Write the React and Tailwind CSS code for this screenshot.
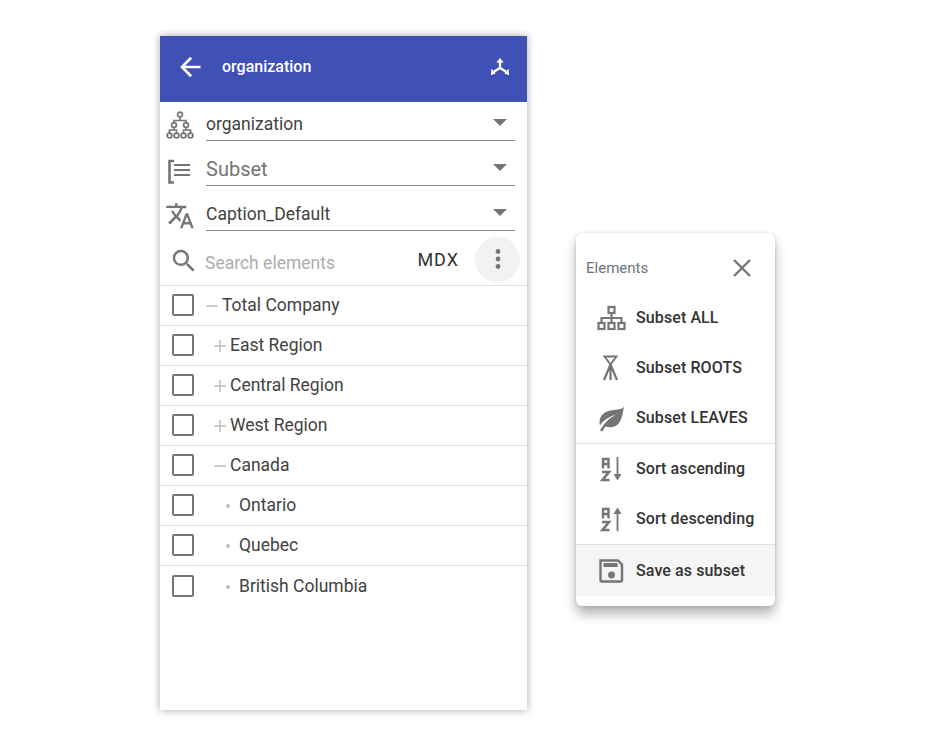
const G = "#757575";

const Arrow = () => (
  <svg width="28" height="28" viewBox="0 0 24 24" fill="#fff"><path d="M21 10.900H7.800l6-6L12.200 3.300 3.500 12l8.700 8.700 1.600-1.600-6-6H21z" /></svg>
);
const Axes = () => (
  <svg width="20" height="20" viewBox="0 0 22 22" fill="none" stroke="#fff" strokeWidth="2.600">
    <path d="M11 4v8M11 12l-6.500 4M11 12l6.500 4" />
    <path d="M7 6L11 1l4 5z" fill="#fff" stroke="none" />
    <path d="M1.500 13L1 20l5.500-2z" fill="#fff" stroke="none" />
    <path d="M20.500 13L21 20l-5.500-2z" fill="#fff" stroke="none" />
  </svg>
);
const Hierarchy = () => (
  <svg width="30" height="30" viewBox="0 0 30 30" fill="none" stroke={G} strokeWidth="1.700">
    <circle cx="15" cy="4.500" r="2.400" />
    <circle cx="9" cy="15" r="2.400" /><circle cx="21" cy="15" r="2.400" />
    <circle cx="4.500" cy="25.500" r="2.400" /><circle cx="11.500" cy="25.500" r="2.400" /><circle cx="18.500" cy="25.500" r="2.400" /><circle cx="25.500" cy="25.500" r="2.400" />
    <path d="M15 7v3.500M9 12.500v-2h12v2M4.500 23v-3h7v3M18.500 23v-3h7v3M9 17.500V20M21 17.500V20" />
  </svg>
);
const SubsetIcon = () => (
  <svg width="30" height="30" viewBox="0 0 30 30" fill="none" stroke={G}>
    <path d="M9 6H4.500v21.500H9" strokeWidth="2.600" />
    <path d="M9 10h16M9 15h16M9 20h16" strokeWidth="2.200" />
  </svg>
);
const Translate = () => (
  <svg width="30" height="30" viewBox="0 0 24 24" fill={G}>
    <path d="M12.870 15.070l-2.540-2.510.03-.03c1.740-1.940 2.980-4.170 3.710-6.530H17V4h-7V2H8v2H1v1.990h11.170C11.500 7.920 10.440 9.750 9 11.350 8.070 10.320 7.300 9.190 6.690 8h-2c.73 1.630 1.730 3.170 2.980 4.560l-5.090 5.020L4 19l5-5 3.110 3.110.76-2.040zM18.500 10h-2L12 22h2l1.120-3h4.750L21 22h2l-4.500-12zm-2.620 7l1.620-4.330L19.120 17h-3.240z" transform="translate(0 .5)" />
  </svg>
);
const Search = () => (
  <svg width="30" height="30" viewBox="0 0 24 24" fill={G}>
    <path d="M15.500 14h-.79l-.28-.27A6.470 6.470 0 0 0 16 9.500 6.500 6.500 0 1 0 9.500 16c1.610 0 3.090-.59 4.230-1.570l.27.28v.79l5 4.990L20.490 19l-4.990-5zm-6 0C7.010 14 5 11.990 5 9.500S7.010 5 9.500 5 14 7.010 14 9.500 11.990 14 9.500 14z" />
  </svg>
);
const Dots = () => (
  <svg width="24" height="24" viewBox="0 0 24 24" fill={G}>
    <circle cx="12" cy="4.500" r="2.400" /><circle cx="12" cy="12" r="2.400" /><circle cx="12" cy="19.500" r="2.400" />
  </svg>
);
const Close = () => (
  <svg width="28" height="28" viewBox="0 0 28 28" fill="none" stroke={G} strokeWidth="2.400">
    <path d="M6 6l16 16M22 6L6 22" />
  </svg>
);
const IconAll = () => (
  <svg width="30" height="30" viewBox="0 0 30 30" fill="none" stroke={G} strokeWidth="2.200">
    <rect x="12.500" y="4" width="6" height="6" />
    <rect x="2.500" y="20" width="6" height="6" /><rect x="12.500" y="20" width="6" height="6" /><rect x="22.500" y="20" width="6" height="6" />
    <path d="M15.500 10v10M5.500 20v-5h20v5" />
  </svg>
);
const IconRoots = () => (
  <svg width="30" height="30" viewBox="0 0 30 30" fill="none" stroke={G}>
    <path d="M8.500 3.500h12L14.500 11.500z" strokeWidth="1.900" />
    <path d="M14.500 11.500L8 27M14.500 11.500V27M14.500 11.500L21 27" strokeWidth="2.200" />
  </svg>
);
const IconLeaf = () => (
  <svg width="30" height="30" viewBox="0 0 30 30" fill={G}>
    <path d="M28 3c-.500 1.500-1.500 2.500-3.500 3C18 7.500 11 6.500 6.500 11.500c-3 3.300-3.400 7.500-2.500 11C7 17.500 13 14 20 11.500c-6.500 3.500-12 8.500-16 16l2.300 1c1-1.800 2-3.500 3.200-5 5.500 1.500 11 .5 14-4.300C26.300 15 27 9 28 3z" />
  </svg>
);
const SortIcon = ({ up }) => (
  <svg width="30" height="30" viewBox="0 0 30 30" fill="none" stroke={G}>
    <path d="M7 14.500V5h5.500v9.500M7 10h5.500" strokeWidth="2.400" />
    <path d="M6 18h7L6.500 26H13.500" strokeWidth="2.600" />
    {up ? (
      <>
        <path d="M21.500 8v19" strokeWidth="1.800" />
        <path d="M17.500 10h8l-4-6.500z" fill={G} stroke="none" />
      </>
    ) : (
      <>
        <path d="M21.500 3v19" strokeWidth="1.800" />
        <path d="M17.500 20h8l-4 6.500z" fill={G} stroke="none" />
      </>
    )}
  </svg>
);
const IconSave = () => (
  <svg width="30" height="30" viewBox="0 0 30 30" fill="none" stroke={G}>
    <path d="M4.500 4.500h17.500L26 8.500v15.500a1.500 1.500 0 0 1-1.500 1.500H6A1.500 1.500 0 0 1 4.500 24z" strokeWidth="2.400" />
    <rect x="7.500" y="7" width="14" height="4" fill={G} stroke="none" />
    <circle cx="15.500" cy="19" r="3.400" fill={G} stroke="none" />
  </svg>
);

function SelectRow({ icon, label, placeholder }) {
  return (
    <div className="flex h-[45px] items-start">
      <div className="flex w-[46px] shrink-0 justify-start pl-[5px] pt-[7px]">{icon}</div>
      <div className={`mr-3 flex h-[38px] flex-1 items-center justify-between border-b border-[#8a8a8a] ${placeholder ? "text-[20px] text-[#757575]" : "text-[17.500px] text-[#424242]"}`}>
        <span className={`${placeholder ? "pt-[4px]" : "pt-[6px]"} leading-none`}>{label}</span>
        <span className="mr-[8px] mt-[2px] h-0 w-0 border-x-[7px] border-t-[7px] border-x-transparent border-t-[#757575]" />
      </div>
    </div>
  );
}

const tree = [
  ["Total Company", "minus", 46, 40],
  ["East Region", "plus", 54, 40],
  ["Central Region", "plus", 54, 40],
  ["West Region", "plus", 54, 40],
  ["Canada", "minus", 54, 40],
  ["Ontario", "dot", 62, 40],
  ["Quebec", "dot", 62, 40],
  ["British Columbia", "dot", 62, 41],
];

function Marker({ kind }) {
  if (kind === "dot") return <span className="mr-[9px] ml-[4px] h-[4px] w-[4px] rounded-full bg-[#bdbdbd]" />;
  return (
    <svg width="14" height="14" viewBox="0 0 14 14" className="mr-[3px] -ml-[1px]" stroke="#bdbdbd" strokeWidth="1.500" fill="none">
      <path d="M1 7h12" />
      {kind === "plus" && <path d="M7 1v12" />}
    </svg>
  );
}

function TreeRow({ label, kind, pad, h, last }) {
  return (
    <div className={`flex items-center text-[17.500px] text-[#424242] ${last ? "" : "border-b border-[#e0e0e0]"}`} style={{ height: h }}>
      <span className="-mt-[1px] ml-[12px] h-[22px] w-[22px] shrink-0 rounded-[2px] border-2 border-[#757575]" />
      <div className="flex items-center" style={{ marginLeft: pad - 34 }}>
        <Marker kind={kind} />
        <span className="pb-[1px]">{label}</span>
      </div>
    </div>
  );
}

function MenuItem({ icon, label, className = "" }) {
  return (
    <div className={`flex h-[50px] items-center pl-[20px] text-[16px] font-medium tracking-[0.1px] text-[#333] ${className}`}>
      <span className="mr-[10px] flex h-[30px] w-[30px] shrink-0 items-center justify-center">{icon}</span>
      <span>{label}</span>
    </div>
  );
}

export default function App() {
  return (
    <div className="flex h-[745px] w-[939px] items-start bg-white font-['Roboto',sans-serif]">
      <div className="mt-[36px] ml-[160px] h-[674px] w-[367px] bg-white shadow-[0_0_8px_rgba(0,0,0,0.35)]">
        <header className="flex h-[66px] items-center bg-[#3f51b5] text-white">
          <span className="ml-[16px] mb-[4px] flex"><Arrow /></span>
          <span className="ml-[18px] flex-1 pb-[4px] text-[16px] font-medium">organization</span>
          <span className="mr-[17px] mb-[4px] flex"><Axes /></span>
        </header>
        <div className="pt-[1px]">
          <SelectRow icon={<Hierarchy />} label="organization" />
          <SelectRow icon={<SubsetIcon />} label="Subset" placeholder />
          <SelectRow icon={<Translate />} label="Caption_Default" />
        </div>
        <div className="flex h-[48px] items-center border-b border-[#e0e0e0]">
          <span className="ml-[9px] mb-[2px] flex"><Search /></span>
          <span className="ml-[6px] flex-1 pt-[3px] text-[17.500px] text-[#adadad]">Search elements</span>
          <span className="mr-[16px] mb-[4px] text-[18px] font-normal tracking-[1px] text-[#333]">MDX</span>
          <span className="mr-[7px] mb-[5px] flex h-[45px] w-[45px] items-center justify-center rounded-full bg-[#f2f2f2]"><Dots /></span>
        </div>
        {tree.map(([label, kind, pad, h], i) => (
          <TreeRow key={label} label={label} kind={kind} pad={pad} h={h} last={i === tree.length - 1} />
        ))}
      </div>
      <aside className="mt-[233px] ml-[49px] h-[373px] w-[199px] rounded-[6px] bg-white shadow-[0_8px_12px_rgba(0,0,0,0.3),0_0_3px_rgba(0,0,0,0.15)]">
        <div className="flex h-[60px] items-center justify-between pr-[19px] pl-[10px] pt-[9px]">
          <span className="pt-[2px] text-[15px] text-[#6b7280]">Elements</span>
          <Close />
        </div>
        <MenuItem icon={<IconAll />} label="Subset ALL" />
        <MenuItem icon={<IconRoots />} label="Subset ROOTS" />
        <MenuItem icon={<IconLeaf />} label="Subset LEAVES" />
        <div className="h-px bg-[#e0e0e0]" />
        <MenuItem icon={<SortIcon />} label="Sort ascending" />
        <MenuItem icon={<SortIcon up />} label="Sort descending" />
        <div className="h-px bg-[#e0e0e0]" />
        <MenuItem icon={<IconSave />} label="Save as subset" className="h-[51px] bg-[#f5f5f5]" />
      </aside>
    </div>
  );
}
